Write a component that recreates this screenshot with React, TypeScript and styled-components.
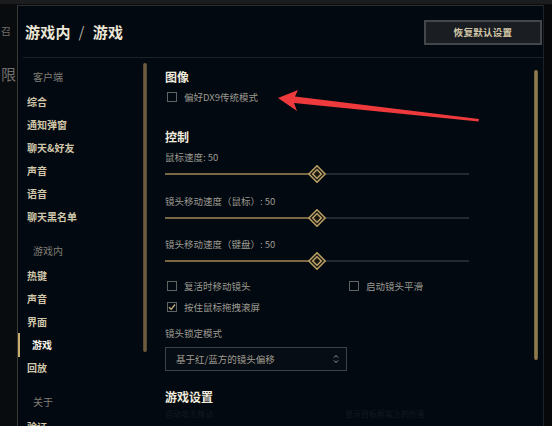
import React from 'react';
import styled, { createGlobalStyle } from 'styled-components';

const Global = createGlobalStyle`
  html, body { margin: 0; padding: 0; background: #05080b; }
  body { font-family: "Noto Sans CJK SC", "Noto Sans", sans-serif; }
  #root { width: 552px; height: 426px; overflow: hidden; }
`;

const Screen = styled.div`
  position: relative;
  width: 552px;
  height: 426px;
  display: flex;
  flex-direction: column;
  background: #07090b;
  overflow: hidden;
`;

const TopStrip = styled.div`
  flex: none;
  height: 4px;
  background: #1b1c1d;
  border-bottom: 1px solid #0c0d0e;
`;

const Row = styled.div`
  flex: 1;
  display: flex;
  min-height: 0;
`;

const SideStrip = styled.div`
  flex: none;
  width: 17px;
  background: #090c0f;
  overflow: hidden;
  display: flex;
  flex-direction: column;
`;

const SideText = styled.div<{ $size: number; $mt: number }>`
  margin-top: ${(p) => p.$mt}px;
  padding-left: 1px;
  font-size: ${(p) => p.$size}px;
  line-height: 18px;
  color: #6f6f6c;
  white-space: nowrap;
`;

const RightStrip = styled.div`
  flex: 1;
  background: #06080a;
`;

const Dialog = styled.div`
  flex: none;
  width: 525px;
  display: flex;
  flex-direction: column;
  background: #020911;
  border-left: 1px solid #3b3a34;
  border-top: 1px solid #2c2d2c;
  border-right: 1px solid #1c2228;
  min-height: 0;
`;

const Header = styled.div`
  flex: none;
  height: 51px;
  margin-left: 5px;
  padding: 0 1px 0 2px;
  display: flex;
  align-items: center;
  justify-content: space-between;
  border-bottom: 1px solid #1a222b;
`;

const Title = styled.div`
  font-size: 15px;
  font-weight: 700;
  color: #ece6d6;
  letter-spacing: 0.2px;
  display: flex;
  gap: 8px;
`;

const Slash = styled.span`
  font-weight: 400;
  color: #b8b2a4;
`;

const ResetButton = styled.button`
  width: 118px;
  height: 25px;
  margin-top: 1px;
  background: #1a1e23;
  border: 2px solid #44474a;
  color: #d4c8a8;
  font-family: inherit;
  font-size: 9.5px;
  font-weight: 700;
  letter-spacing: 0.3px;
  padding: 0;
`;

const Body = styled.div`
  flex: 1;
  display: flex;
  min-height: 0;
  overflow: hidden;
`;

const Nav = styled.nav`
  flex: none;
  width: 125px;
  padding-top: 5px;
  display: flex;
  flex-direction: column;
`;

const NavSection = styled.div<{ $first?: boolean }>`
  height: 27px;
  line-height: 27px;
  margin-top: ${(p) => (p.$first ? 0 : 9)}px;
  padding-left: 15px;
  font-size: 10px;
  color: #817e74;
`;

const NavItem = styled.div<{ $active?: boolean }>`
  position: relative;
  height: 23px;
  line-height: 23px;
  padding-left: ${(p) => (p.$active ? 14 : 9)}px;
  font-size: 10px;
  font-weight: 700;
  color: ${(p) => (p.$active ? '#f5f1e6' : '#d0c6a9')};
  white-space: nowrap;
  &::before {
    content: '';
    display: ${(p) => (p.$active ? 'block' : 'none')};
    position: absolute;
    left: -1px;
    top: 0;
    width: 3px;
    height: 24px;
    background: #c9ad6c;
  }
`;

const ScrollCol = styled.div<{ $w: number; $top: number; $h: number; $light?: boolean }>`
  flex: none;
  width: ${(p) => p.$w}px;
  &::after {
    content: '';
    display: block;
    margin-top: ${(p) => p.$top}px;
    width: 4px;
    height: ${(p) => p.$h}px;
    border-radius: 2px;
    background: ${(p) =>
      p.$light
        ? 'linear-gradient(90deg, #6a5a3a, #9a8450 50%, #6a5a3a)'
        : 'linear-gradient(90deg, #4f432e, #776343 50%, #4f432e)'};
  }
`;

const Content = styled.div`
  flex: 1;
  padding: 10px 0 0 17px;
  display: flex;
  flex-direction: column;
  min-width: 0;
`;

const Heading = styled.div<{ $mt?: number }>`
  margin-top: ${(p) => p.$mt ?? 0}px;
  height: 18px;
  line-height: 18px;
  font-size: 12px;
  font-weight: 700;
  color: #f0ebdd;
`;

const Label = styled.div<{ $mt?: number }>`
  margin-top: ${(p) => p.$mt ?? 0}px;
  height: 16px;
  line-height: 16px;
  font-size: 9.5px;
  color: #9c998f;
  white-space: nowrap;
`;

const CheckRow = styled.div<{ $mt?: number }>`
  margin-top: ${(p) => p.$mt ?? 0}px;
  height: 20px;
  display: grid;
  grid-template-columns: 182px auto;
  align-items: center;
`;

const CheckItem = styled.div`
  display: flex;
  align-items: center;
  gap: 7px;
  font-size: 9.5px;
  color: #9c998f;
  white-space: nowrap;
`;

const Box = styled.span`
  margin-left: 2px;
  width: 10px;
  height: 10px;
  box-sizing: border-box;
  border: 1px solid #626464;
  display: flex;
  align-items: center;
  justify-content: center;
`;

const SliderWrap = styled.div`
  position: relative;
  width: 304px;
  height: 18px;
  display: flex;
  align-items: center;
`;

const Track = styled.div`
  width: 100%;
  height: 2px;
  background: #222a31;
  display: flex;
`;

const Fill = styled.div`
  height: 100%;
  background: #7a6844;
`;

const Thumb = styled.svg`
  position: absolute;
  top: 0;
  margin-left: -9px;
`;

const Select = styled.div`
  margin-top: 6px;
  width: 182px;
  height: 24px;
  box-sizing: border-box;
  border: 1px solid #3e4245;
  background: #060d14;
  display: flex;
  align-items: center;
  justify-content: space-between;
  padding: 0 7px 0 10px;
  font-size: 9.5px;
  color: #a29e92;
`;

const FaintRow = styled.div`
  height: 16px;
  line-height: 16px;
  display: grid;
  grid-template-columns: 180px auto;
  font-size: 8px;
  color: #141a20;
  white-space: nowrap;
`;

const ArrowOverlay = styled.svg`
  position: absolute;
  left: 0;
  top: 0;
  pointer-events: none;
`;

const Check = ({ checked }: { checked?: boolean }) => (
  <Box>
    {checked && (
      <svg width="8" height="8" viewBox="0 0 8 8">
        <path d="M1 4.2 L3.2 6.3 L7 1.5" stroke="#c8b07a" strokeWidth="1.3" fill="none" />
      </svg>
    )}
  </Box>
);

const Slider = ({ value }: { value: number }) => (
  <SliderWrap>
    <Track>
      <Fill style={{ width: `${value}%` }} />
    </Track>
    <Thumb width="18" height="18" viewBox="0 0 18 18" style={{ left: `${value}%` }}>
      <polygon points="9,0.8 17.2,9 9,17.2 0.8,9" fill="#1b1a16" stroke="#b99d62" strokeWidth="1.6" />
      <polygon points="9,4.6 13.4,9 9,13.4 4.6,9" fill="#2a2418" stroke="#c8aa6e" strokeWidth="1.3" />
      <polygon points="9,7.6 10.4,9 9,10.4 7.6,9" fill="#0e0d0a" />
    </Thumb>
  </SliderWrap>
);

const SelectArrows = () => (
  <svg width="6" height="10" viewBox="0 0 6 10">
    <path d="M1 3.5 L3 1.5 L5 3.5 M1 6.5 L3 8.5 L5 6.5" stroke="#a29e92" strokeWidth="1" fill="none" />
  </svg>
);

export default function App() {
  return (
    <Screen>
      <Global />
      <TopStrip />
      <Row>
        <SideStrip>
          <SideText $size={10} $mt={17}>召</SideText>
          <SideText $size={15} $mt={25}>限</SideText>
        </SideStrip>
        <Dialog>
          <Header>
            <Title>
              <span>游戏内</span>
              <Slash>/</Slash>
              <span>游戏</span>
            </Title>
            <ResetButton>恢复默认设置</ResetButton>
          </Header>
          <Body>
            <Nav>
              <NavSection $first>客户端</NavSection>
              <NavItem>综合</NavItem>
              <NavItem>通知弹窗</NavItem>
              <NavItem>聊天&amp;好友</NavItem>
              <NavItem>声音</NavItem>
              <NavItem>语音</NavItem>
              <NavItem>聊天黑名单</NavItem>
              <NavSection>游戏内</NavSection>
              <NavItem>热键</NavItem>
              <NavItem>声音</NavItem>
              <NavItem>界面</NavItem>
              <NavItem $active>游戏</NavItem>
              <NavItem>回放</NavItem>
              <NavSection>关于</NavSection>
              <NavItem>验证</NavItem>
            </Nav>
            <ScrollCol $w={5} $top={5} $h={289} />
            <Content>
              <Heading>图像</Heading>
              <CheckRow $mt={1}>
                <CheckItem>
                  <Check />
                  偏好DX9传统模式
                </CheckItem>
              </CheckRow>
              <Heading $mt={21}>控制</Heading>
              <Label $mt={3}>鼠标速度: 50</Label>
              <Slider value={50} />
              <Label $mt={10}>镜头移动速度（鼠标）: 50</Label>
              <Slider value={50} />
              <Label $mt={9}>镜头移动速度（键盘）: 50</Label>
              <Slider value={50} />
              <CheckRow $mt={6}>
                <CheckItem>
                  <Check />
                  复活时移动镜头
                </CheckItem>
                <CheckItem>
                  <Check />
                  启动镜头平滑
                </CheckItem>
              </CheckRow>
              <CheckRow $mt={1}>
                <CheckItem>
                  <Check checked />
                  按住鼠标拖拽滚屏
                </CheckItem>
              </CheckRow>
              <Label $mt={8}>镜头锁定模式</Label>
              <Select>
                <span>基于红/蓝方的镜头偏移</span>
                <SelectArrows />
              </Select>
              <Heading $mt={17}>游戏设置</Heading>
              <FaintRow>
                <span>自动攻击移动</span>
                <span>显示目标框架上的伤害</span>
              </FaintRow>
            </Content>
            <ScrollCol $w={9} $top={12} $h={290} $light />
          </Body>
        </Dialog>
        <RightStrip />
      </Row>
      <ArrowOverlay width="552" height="426" viewBox="0 0 552 426">
        <polygon
          points="278,98 298,90 295,96.5 479,119 478.5,121.5 294,103 297,111"
          fill="#ee3a3c"
        />
      </ArrowOverlay>
    </Screen>
  );
}
